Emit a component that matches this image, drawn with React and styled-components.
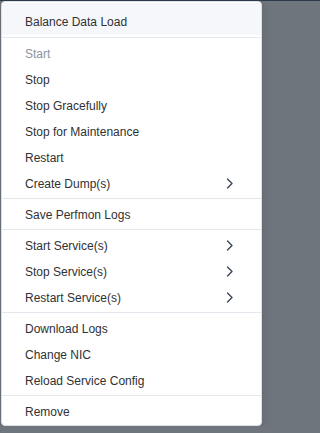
import styled, { createGlobalStyle } from 'styled-components'

const GlobalStyle = createGlobalStyle`
    html, body {
        margin: 0;
        padding: 0;
        background: #6f757d;
    }
    body {
        border-top: 1px solid #2c3a4b;
        font-family: "Liberation Sans", Arial, sans-serif;
    }
`

const Menu = styled.ul`
    list-style: none;
    margin: 0 1px;
    padding: 1px 0;
    width: 261px;
    background: #ffffff;
    border: 1px solid #dcdfe6;
    border-radius: 4px;
    box-sizing: border-box;
    box-shadow: 0 2px 12px rgba(0, 0, 0, 0.12);
`

const Item = styled.li`
    display: flex;
    align-items: center;
    justify-content: space-between;
    box-sizing: border-box;
    height: ${({ tall }) => (tall ? '32px' : '26px')};
    padding: ${({ tall }) => (tall ? '6px' : '1px')} 27px 0 23px;
    font-size: 12px;
    color: ${({ disabled }) => (disabled ? '#8f949c' : '#303133')};
    background: ${({ active }) => (active ? '#f5f7fa' : 'transparent')};
    cursor: ${({ disabled }) => (disabled ? 'not-allowed' : 'pointer')};
    white-space: nowrap;
`

const Divider = styled.li`
    height: 1px;
    margin: 2px 0;
    background: #e4e7ed;
`

const Chevron = () => (
    <svg width="8" height="11" viewBox="0 0 8 11" fill="none">
        <path d="M1.5 1 L6 5.5 L1.5 10" stroke="#3a475a" strokeWidth="1.4" strokeLinecap="round" strokeLinejoin="round" />
    </svg>
)

const groups = [
    [{ label: 'Balance Data Load', tall: true, active: true }],
    [
        { label: 'Start', disabled: true },
        { label: 'Stop' },
        { label: 'Stop Gracefully' },
        { label: 'Stop for Maintenance' },
        { label: 'Restart' },
        { label: 'Create Dump(s)', sub: true },
    ],
    [{ label: 'Save Perfmon Logs' }],
    [
        { label: 'Start Service(s)', sub: true },
        { label: 'Stop Service(s)', sub: true },
        { label: 'Restart Service(s)', sub: true },
    ],
    [
        { label: 'Download Logs' },
        { label: 'Change NIC' },
        { label: 'Reload Service Config' },
    ],
    [{ label: 'Remove' }],
]

function App() {
    return (
        <>
            <GlobalStyle />
            <Menu>
                {groups.map((group, gi) => (
                    <>
                        {gi > 0 && <Divider key={`d${gi}`} />}
                        {group.map((item) => (
                            <Item key={item.label} tall={item.tall} active={item.active} disabled={item.disabled}>
                                <span>{item.label}</span>
                                {item.sub && <Chevron />}
                            </Item>
                        ))}
                    </>
                ))}
            </Menu>
        </>
    )
}

export default App
